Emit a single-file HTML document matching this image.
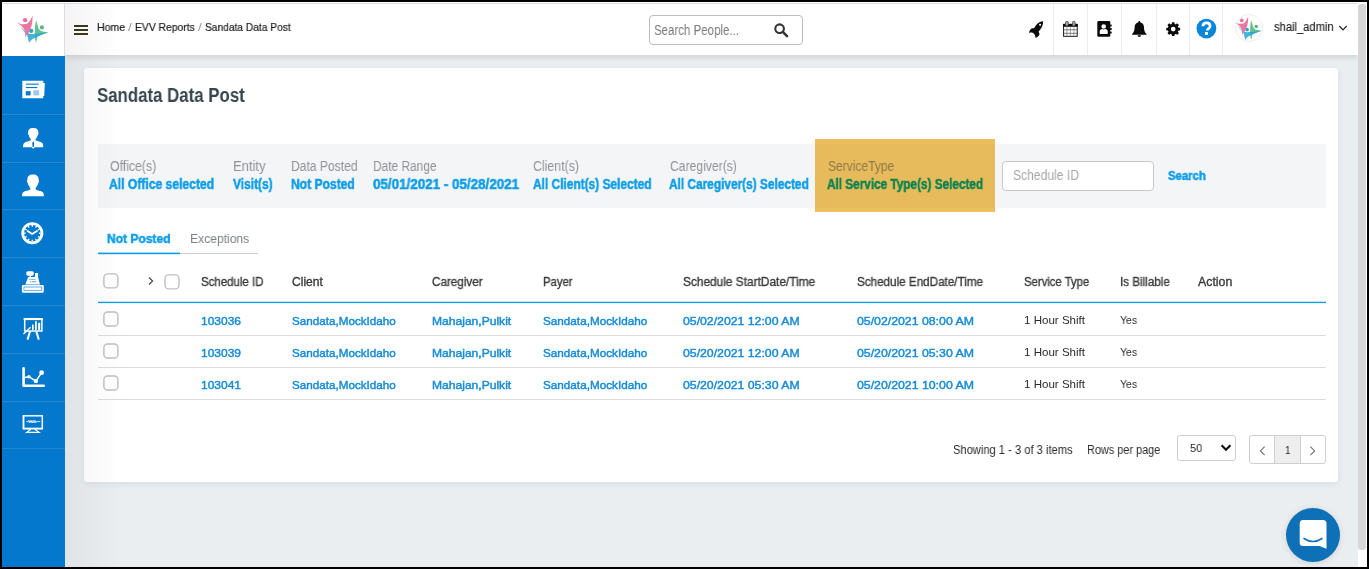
<!DOCTYPE html>
<html><head><meta charset="utf-8"><title>Sandata Data Post</title>
<style>
*{box-sizing:border-box;margin:0;padding:0}
html,body{width:1369px;height:569px;overflow:hidden;background:#000;font-family:"Liberation Sans",sans-serif}
#app{position:absolute;left:2px;top:2px;width:1365px;height:565px;background:#eaeef1;overflow:hidden}
.abs{position:absolute}
.t{position:absolute;white-space:pre;line-height:1;transform-origin:0 50%;display:block}
#root{position:absolute;left:-2px;top:-2px;width:1369px;height:569px}
.t{will-change:transform}
</style></head><body>
<div id="app"><div id="root">
<!-- page bg gradient edges -->
<div class="abs" style="left:65px;top:55px;width:1293px;height:512px;background:#eaeef1"></div>
<!-- header -->
<div class="abs" style="left:65px;top:2px;width:1293px;height:53px;background:#fff;box-shadow:0 2px 6px rgba(0,0,0,.13)"></div>
<div class="abs" style="left:2px;top:2px;width:1356px;height:1px;background:#fff"></div><div class="abs" style="left:3px;top:3px;width:1355px;height:1px;background:#dcdde2"></div>
<!-- logo box -->
<div class="abs" style="left:2px;top:4px;width:63px;height:52px;background:#fff;border-right:1px solid #d9dde2"></div>
<!-- sidebar -->
<div class="abs" id="side" style="left:2px;top:56px;width:63px;height:511px;background:#0478cc"></div>
<div class="abs" style="left:2px;top:114px;width:63px;height:1px;background:#2186d6"></div>
<div class="abs" style="left:2px;top:162px;width:63px;height:1px;background:#2186d6"></div>
<div class="abs" style="left:2px;top:209px;width:63px;height:1px;background:#2186d6"></div>
<div class="abs" style="left:2px;top:257px;width:63px;height:1px;background:#2186d6"></div>
<div class="abs" style="left:2px;top:305px;width:63px;height:1px;background:#2186d6"></div>
<div class="abs" style="left:2px;top:353px;width:63px;height:1px;background:#2186d6"></div>
<div class="abs" style="left:2px;top:401px;width:63px;height:1px;background:#2186d6"></div>
<div class="abs" style="left:2px;top:448px;width:63px;height:1px;background:#2186d6"></div>
<svg class="abs" style="left:20px;top:78px" width="28" height="24" viewBox="20 78 28 24">
<path d="M43 83 H44.8 L44.2 96 H43 Z" fill="#fff"/>
<rect x="22.3" y="80.7" width="20.9" height="17.6" rx=".6" fill="#fff"/>
<rect x="25.8" y="83.6" width="13" height="1.1" fill="#0478cc"/>
<rect x="25.8" y="87" width="11.5" height="1.1" fill="#0478cc"/>
<rect x="25.8" y="91.2" width="4.8" height="4.2" fill="#0478cc"/>
<rect x="33.3" y="90.3" width="5.8" height="5.1" fill="#9cc9ee"/>
</svg>
<svg class="abs" style="left:20px;top:124px" width="28" height="28" viewBox="20 124 28 28">
<path d="M28.3 132 C28 129.4 30 127.9 33.2 127.9 C36.4 127.9 38.4 129.4 38.2 132 C38.7 133 38.5 134.4 37.8 135 C37.3 137 36.4 138.3 35.6 139 V140.3 C37 141.2 40.5 141.6 42 142.8 C43 143.7 43.3 145.6 43.3 147.3 H34.6 L33.2 149 L31.8 147.3 H23 C23 145.6 23.3 143.7 24.4 142.8 C26 141.6 29.4 141.2 30.8 140.3 V139 C30 138.3 29.1 137 28.7 135 C28 134.4 27.8 133 28.3 132 Z" fill="#fff"/>
<path d="M33.2 141.2 L34.2 143 L33.9 146.2 L33.2 147.2 L32.5 146.2 L32.2 143 Z" fill="#0478cc"/>
</svg>
<svg class="abs" style="left:20px;top:172px" width="28" height="28" viewBox="20 172 28 28">
<path d="M27.4 179.5 C27 176.4 29.4 174.4 33 174.4 C36.6 174.4 39 176.4 38.6 179.5 C39.2 180.8 39 182.4 38.2 183.2 C37.7 185.4 36.6 187 35.7 187.8 V189.4 C37.4 190.4 41 190.8 42.6 192 C43.6 192.9 43.9 194.6 43.9 196.2 H22 C22 194.6 22.3 192.9 23.4 192 C25 190.8 28.6 190.4 30.3 189.4 V187.8 C29.4 187 28.3 185.4 27.8 183.2 C27 182.4 26.8 180.8 27.4 179.5 Z" fill="#fff"/>
</svg>
<svg class="abs" style="left:19px;top:220px" width="27" height="27" viewBox="19 220 27 27">
<circle cx="32.3" cy="233.2" r="9.65" fill="none" stroke="#fff" stroke-width="2.8"/><path d="M32.30 224.90 L32.30 226.70" stroke="#fff" stroke-width="1.3"/><path d="M36.45 226.01 L35.55 227.57" stroke="#fff" stroke-width="1.3"/><path d="M39.49 229.05 L37.93 229.95" stroke="#fff" stroke-width="1.3"/><path d="M40.60 233.20 L38.80 233.20" stroke="#fff" stroke-width="1.3"/><path d="M39.49 237.35 L37.93 236.45" stroke="#fff" stroke-width="1.3"/><path d="M36.45 240.39 L35.55 238.83" stroke="#fff" stroke-width="1.3"/><path d="M32.30 241.50 L32.30 239.70" stroke="#fff" stroke-width="1.3"/><path d="M28.15 240.39 L29.05 238.83" stroke="#fff" stroke-width="1.3"/><path d="M25.11 237.35 L26.67 236.45" stroke="#fff" stroke-width="1.3"/><path d="M24.00 233.20 L25.80 233.20" stroke="#fff" stroke-width="1.3"/><path d="M25.11 229.05 L26.67 229.95" stroke="#fff" stroke-width="1.3"/><path d="M28.15 226.01 L29.05 227.57" stroke="#fff" stroke-width="1.3"/>
<path d="M27.6 231 L32.1 233.9 L37 230.9" fill="none" stroke="#fff" stroke-width="1.8" stroke-linejoin="round" stroke-linecap="round"/>
</svg>
<svg class="abs" style="left:20px;top:268px" width="28" height="28" viewBox="20 268 28 28">
<rect x="26.3" y="271.2" width="7.5" height="4.5" rx="1.6" fill="#fff"/>
<rect x="29.6" y="275" width="1.4" height="2.4" fill="#fff"/>
<rect x="35" y="273" width="3.1" height="4" fill="#fff"/>
<path d="M28.2 276.9 H38 L40 284.4 H25.3 Z" fill="#fff"/>
<rect x="29.3" y="279" width="1" height="1" fill="#0478cc" opacity=".7"/><rect x="31" y="279" width="4.5" height="1" fill="#0478cc" opacity=".5"/>
<rect x="30.3" y="281.2" width="1" height="1" fill="#0478cc" opacity=".9"/><rect x="32" y="281" width="4.3" height="1.3" fill="#0478cc" opacity=".5"/>
<rect x="21.9" y="284.9" width="21.9" height="7.8" rx="1.3" fill="#fff"/>
<rect x="24" y="287" width="17.8" height="3.3" fill="none" stroke="#0478cc" stroke-width=".7" opacity=".85"/>
<rect x="24.6" y="288" width="7.5" height="1.3" fill="#fff"/><rect x="33.4" y="288" width="7.5" height="1.3" fill="#fff"/>
</svg>
<svg class="abs" style="left:20px;top:314px" width="28" height="30" viewBox="20 314 28 30">
<rect x="23.6" y="318.1" width="19.4" height="2" fill="#fff"/>
<rect x="24.7" y="319" width="17.2" height="12" fill="none" stroke="#fff" stroke-width="1.5"/>
<rect x="32" y="324.6" width="1.7" height="5.3" fill="#fff"/><rect x="35" y="321.2" width="1.8" height="8.7" fill="#fff"/><rect x="38.1" y="322.8" width="2.1" height="7.1" fill="#fff"/>
<path d="M23.4 334 L30.6 327.2" stroke="#fff" stroke-width="1.3"/>
<path d="M30 331.5 L27.5 339.6" stroke="#fff" stroke-width="2"/><path d="M36.3 331.5 L38.8 339.6" stroke="#fff" stroke-width="2"/>
</svg>
<svg class="abs" style="left:20px;top:364px" width="28" height="28" viewBox="20 364 28 28">
<path d="M23.6 368.2 V385.7 H43.8" fill="none" stroke="#fff" stroke-width="2.6" stroke-linejoin="round" stroke-linecap="round"/>
<path d="M24.5 377.4 L28.9 376.7 L35.9 381.2 L41.6 372.7" fill="none" stroke="#fff" stroke-width="1.5"/>
<circle cx="28.9" cy="376.7" r="1.7" fill="#fff"/><circle cx="35.9" cy="381.2" r="2.1" fill="#fff"/><circle cx="41.6" cy="372.7" r="2.4" fill="#fff"/>
</svg>
<svg class="abs" style="left:20px;top:412px" width="28" height="24" viewBox="20 412 28 24">
<rect x="23.4" y="415.8" width="18.9" height="12.9" fill="none" stroke="#fff" stroke-width="1.5" opacity=".95"/>
<rect x="22.8" y="415.2" width="1.6" height="14" fill="#fff" opacity=".8"/>
<rect x="23" y="427.6" width="19.8" height="1.7" fill="#fff" opacity=".75"/>
<path d="M26.3 421.6 H28 L28.6 420.4 L29.4 422.8 L30.2 420.4 L31 422.8 L31.8 420.4 L32.6 422.8 L33.4 420.4 L34.2 422.8 L35 420.4 L35.8 422.8 L36.5 421.6 H40.3" fill="none" stroke="#fff" stroke-width=".8"/>
<path d="M31 429.3 L26.6 432.4 H39.2 L34.8 429.3" fill="none" stroke="#fff" stroke-width="1.1"/>
</svg>
<svg class="abs" style="left:16px;top:14px;" width="34.0" height="30.0" viewBox="16 14 34 30">
<g>
<path d="M36.2 20.2 C36.6 21.6 37 22.9 37.3 24.2 C37.6 25.6 38 26.8 38.4 27.9 C39.2 29.6 40.4 30.7 41.8 31.3 C44 31.8 46.2 32.1 48.4 32.4 C46.4 33.2 44.4 33.8 42.5 34.2 C40.9 34.8 39.3 35.3 37.7 35.7 C37.3 38 36.7 40.4 35.9 42.7 C35.3 40.6 35 38.4 34.9 36.3 C34.7 35.2 34.7 34.2 34.7 33.1 C34.8 31 34.9 29 35 27 C35.1 24.8 35.5 22.4 36.2 20.2 Z" fill="#57b782" fill-opacity=".9"/>
<circle cx="41.9" cy="27.4" r="2.05" fill="#57b782"/>
<path d="M20 25.7 C21 27 22 28 22.6 28.6 C24 30.6 25.6 32 27 32.6 C28 33.4 28.8 33.8 29.6 33.7 C31.2 34.2 33 34 34.4 33.9 C36 33.8 38 33.6 39.5 33.4 C42 33 44.6 32.8 47 32.6 C44 34 41 35.2 38.1 36.4 C36 37.3 34 38.2 32.2 39.2 C31 40.2 30 41.4 29.1 42.8 C28.4 40.2 27.8 37.6 27.2 35.2 C26.4 34.2 25.6 33.3 24.8 32.4 C23 30.2 21.4 28 20 25.7 Z" fill="#27a6d6" fill-opacity=".85"/>
<circle cx="31.2" cy="30.9" r="2.15" fill="#27a6d6"/>
<path d="M17.3 22.7 C19 23.6 21 24.2 23 24.2 C24.6 24.2 26.2 24 27.4 23.6 C29.8 21.6 31.4 18.6 32.5 15.3 C32.7 17.8 32.5 20.4 32.2 22.8 C31.8 25.2 31.2 27.4 30.3 29.4 C29.3 31.6 28 33.6 26.6 35.3 C26.1 36 25.6 36.6 25.1 37.2 C25.2 35.6 25.4 34 25.5 32.4 C25 30.8 24.2 29.2 23.3 27.9 C22.3 26.6 21 25.5 19.6 24.6 C18.8 24 18 23.4 17.3 22.7 Z" fill="#e96d97" fill-opacity=".93"/>
<circle cx="25.1" cy="20.2" r="2.15" fill="#e96d97"/>
</g></svg>
<!-- hamburger -->
<div class="abs" style="left:74px;top:25px;width:14px;height:2px;background:#3c3a1c;box-shadow:0 4px 0 #3c3a1c,0 8px 0 #3c3a1c"></div>
<!-- search people box -->
<div class="abs" style="left:649px;top:15px;width:154px;height:30px;border:1px solid #bdbdbd;border-radius:4px;background:#fff"></div>
<svg class="abs" style="left:772px;top:21px" width="18" height="18" viewBox="0 0 18 18"><circle cx="7.6" cy="7.7" r="4.3" fill="none" stroke="#333" stroke-width="2.1"/><path d="M10.8 10.9 L15 15.1" stroke="#333" stroke-width="2.6" stroke-linecap="round"/></svg>
<div class="abs" style="left:1053px;top:4px;width:1px;height:51px;background:#ececec"></div>
<div class="abs" style="left:1087px;top:4px;width:1px;height:51px;background:#ececec"></div>
<div class="abs" style="left:1121px;top:4px;width:1px;height:51px;background:#ececec"></div>
<div class="abs" style="left:1156px;top:4px;width:1px;height:51px;background:#ececec"></div>
<div class="abs" style="left:1189px;top:4px;width:1px;height:51px;background:#ececec"></div>
<div class="abs" style="left:1222px;top:4px;width:1px;height:51px;background:#ececec"></div>
<svg class="abs" style="left:1026px;top:19px" width="20" height="21" viewBox="1026 19 20 21">
<path d="M1043.1 21.2 C1040.6 21.3 1038.2 22.6 1036.4 24.8 C1035.5 25.9 1034.7 27.1 1034 28.3 C1032.6 28 1031.2 28.4 1030.4 29.6 C1029.8 30.6 1029.2 31.8 1028.9 32.9 C1030.2 32.4 1031.6 32.3 1032.6 32.8 C1033.6 33.4 1034.6 34.3 1035 35.2 C1035.2 36 1035.4 37 1035.6 37.9 C1036.8 37.4 1038.4 36.4 1039.3 35 C1039.6 34 1039.2 32.8 1038.6 31.6 C1039.6 30.6 1040.8 29.2 1041.6 27.6 C1042.6 25.6 1043.2 23.4 1043.1 21.2 Z" fill="#0b0b0b"/>
<circle cx="1040.1" cy="24.8" r="1.05" fill="#fff"/></svg>
<svg class="abs" style="left:1061px;top:19px" width="19" height="20" viewBox="1061 19 19 20">
<rect x="1063.6" y="24.4" width="13.6" height="11.9" fill="#fff" stroke="#0b0b0b" stroke-width=".95"/>
<rect x="1063.1" y="23.9" width="14.6" height="2.9" fill="#0b0b0b"/><path d="M1066.9 26.6 V36.3" stroke="#8a8a8a" stroke-width=".7"/><path d="M1070.4 26.6 V36.3" stroke="#8a8a8a" stroke-width=".7"/><path d="M1073.9 26.6 V36.3" stroke="#8a8a8a" stroke-width=".7"/><path d="M1063.6 29.8 H1077.2" stroke="#444" stroke-width=".7"/><path d="M1063.6 33.3 H1077.2" stroke="#444" stroke-width=".7"/>
<rect x="1065.5" y="21.3" width="2.8" height="4.8" rx="1.3" fill="#a5a5a5" stroke="#333" stroke-width=".7"/>
<rect x="1072.4" y="21.3" width="2.8" height="4.8" rx="1.3" fill="#a5a5a5" stroke="#333" stroke-width=".7"/>
</svg>
<svg class="abs" style="left:1095px;top:19px" width="19" height="20" viewBox="1095 19 19 20">
<rect x="1097.3" y="21.1" width="13" height="15.7" rx="1.3" fill="#0b0b0b"/>
<rect x="1110" y="24.6" width="1.7" height="2" rx=".5" fill="#0b0b0b"/><rect x="1110" y="28" width="1.7" height="2" rx=".5" fill="#0b0b0b"/><rect x="1110" y="31.4" width="1.7" height="2" rx=".5" fill="#0b0b0b"/>
<circle cx="1103.7" cy="26.5" r="2.3" fill="#fff"/>
<path d="M1099.7 33 V31.8 C1099.7 30 1101 29.2 1102.2 29.1 C1103 29.7 1104.4 29.7 1105.2 29.1 C1106.4 29.2 1107.8 30 1107.8 31.8 V33 C1107.8 33.6 1107.4 34 1106.8 34 H1100.7 C1100.1 34 1099.7 33.6 1099.7 33 Z" fill="#fff"/>
</svg>
<svg class="abs" style="left:1130px;top:19px" width="19" height="20" viewBox="1130 19 19 20">
<path d="M1139.3 21.1 C1139.9 21.1 1140.2 21.6 1140.2 22.2 C1142.6 22.7 1144 24.6 1144 27.2 C1144 30.4 1144.8 32.4 1146.5 34 V34.8 H1132.1 V34 C1133.8 32.4 1134.6 30.4 1134.6 27.2 C1134.6 24.6 1136 22.7 1138.4 22.2 C1138.4 21.6 1138.7 21.1 1139.3 21.1 Z" fill="#0b0b0b"/>
<path d="M1137.5 35.2 H1141.1 C1141.1 36.2 1140.3 36.9 1139.3 36.9 C1138.3 36.9 1137.5 36.2 1137.5 35.2 Z" fill="#0b0b0b"/>
</svg>
<svg class="abs" style="left:1164px;top:20px" width="19" height="19" viewBox="1164 20 19 19">
<rect x="1171.85" y="22.2" width="2.7" height="3.4" rx=".5" fill="#0b0b0b" transform="rotate(0 1173.2 29.1)"/><rect x="1171.85" y="22.2" width="2.7" height="3.4" rx=".5" fill="#0b0b0b" transform="rotate(45 1173.2 29.1)"/><rect x="1171.85" y="22.2" width="2.7" height="3.4" rx=".5" fill="#0b0b0b" transform="rotate(90 1173.2 29.1)"/><rect x="1171.85" y="22.2" width="2.7" height="3.4" rx=".5" fill="#0b0b0b" transform="rotate(135 1173.2 29.1)"/><rect x="1171.85" y="22.2" width="2.7" height="3.4" rx=".5" fill="#0b0b0b" transform="rotate(180 1173.2 29.1)"/><rect x="1171.85" y="22.2" width="2.7" height="3.4" rx=".5" fill="#0b0b0b" transform="rotate(225 1173.2 29.1)"/><rect x="1171.85" y="22.2" width="2.7" height="3.4" rx=".5" fill="#0b0b0b" transform="rotate(270 1173.2 29.1)"/><rect x="1171.85" y="22.2" width="2.7" height="3.4" rx=".5" fill="#0b0b0b" transform="rotate(315 1173.2 29.1)"/><circle cx="1173.2" cy="29.1" r="3.9" fill="none" stroke="#0b0b0b" stroke-width="3.1"/></svg>
<svg class="abs" style="left:1195px;top:17px" width="23" height="23" viewBox="1195 17 23 23">
<circle cx="1206.4" cy="28.6" r="9.9" fill="#0a86d8"/>
<path d="M1202.9 26.3 C1202.9 24 1204.4 22.8 1206.5 22.8 C1208.6 22.8 1210.1 24 1210.1 25.9 C1210.1 27.4 1209.2 28.1 1208.2 28.8 C1207.5 29.3 1207.3 29.7 1207.3 30.6" fill="none" stroke="#fff" stroke-width="2.7"/>
<rect x="1205" y="32" width="2.9" height="2.9" fill="#fff"/>
</svg>
<div class="abs" style="left:1234.5px;top:14px;width:28px;height:28px;border-radius:50%;background:#fff;border:1px solid #ededed"></div>
<svg class="abs" style="left:1234.2px;top:14.6px;" width="29.2" height="25.8" viewBox="16 14 34 30">
<g>
<path d="M36.2 20.2 C36.6 21.6 37 22.9 37.3 24.2 C37.6 25.6 38 26.8 38.4 27.9 C39.2 29.6 40.4 30.7 41.8 31.3 C44 31.8 46.2 32.1 48.4 32.4 C46.4 33.2 44.4 33.8 42.5 34.2 C40.9 34.8 39.3 35.3 37.7 35.7 C37.3 38 36.7 40.4 35.9 42.7 C35.3 40.6 35 38.4 34.9 36.3 C34.7 35.2 34.7 34.2 34.7 33.1 C34.8 31 34.9 29 35 27 C35.1 24.8 35.5 22.4 36.2 20.2 Z" fill="#57b782" fill-opacity=".9"/>
<circle cx="41.9" cy="27.4" r="2.05" fill="#57b782"/>
<path d="M20 25.7 C21 27 22 28 22.6 28.6 C24 30.6 25.6 32 27 32.6 C28 33.4 28.8 33.8 29.6 33.7 C31.2 34.2 33 34 34.4 33.9 C36 33.8 38 33.6 39.5 33.4 C42 33 44.6 32.8 47 32.6 C44 34 41 35.2 38.1 36.4 C36 37.3 34 38.2 32.2 39.2 C31 40.2 30 41.4 29.1 42.8 C28.4 40.2 27.8 37.6 27.2 35.2 C26.4 34.2 25.6 33.3 24.8 32.4 C23 30.2 21.4 28 20 25.7 Z" fill="#27a6d6" fill-opacity=".85"/>
<circle cx="31.2" cy="30.9" r="2.15" fill="#27a6d6"/>
<path d="M17.3 22.7 C19 23.6 21 24.2 23 24.2 C24.6 24.2 26.2 24 27.4 23.6 C29.8 21.6 31.4 18.6 32.5 15.3 C32.7 17.8 32.5 20.4 32.2 22.8 C31.8 25.2 31.2 27.4 30.3 29.4 C29.3 31.6 28 33.6 26.6 35.3 C26.1 36 25.6 36.6 25.1 37.2 C25.2 35.6 25.4 34 25.5 32.4 C25 30.8 24.2 29.2 23.3 27.9 C22.3 26.6 21 25.5 19.6 24.6 C18.8 24 18 23.4 17.3 22.7 Z" fill="#e96d97" fill-opacity=".93"/>
<circle cx="25.1" cy="20.2" r="2.15" fill="#e96d97"/>
</g></svg>
<svg class="abs" style="left:1337px;top:23px" width="12" height="10" viewBox="1337 23 12 10"><path d="M1339.3 26 L1343 29.8 L1346.7 26" fill="none" stroke="#222" stroke-width="1.2"/></svg>
<!-- card -->
<div class="abs" style="left:84px;top:68px;width:1254px;height:414px;background:#fff;border-radius:3px;box-shadow:0 2px 6px rgba(0,0,0,.07)"></div>
<!-- filter bar -->
<div class="abs" style="left:98px;top:144px;width:1228px;height:64px;background:#f3f5f7"></div>
<div class="abs" style="left:815px;top:139px;width:180px;height:73px;background:#ebbf5e"></div><div class="abs" style="left:815px;top:144px;width:180px;height:64px;background:#e7bb5b"></div>
<div class="abs" style="left:1002px;top:161px;width:152px;height:30px;border:1px solid #c9c9c9;border-radius:4px;background:#fff"></div>
<!-- tabs -->
<div class="abs" style="left:98px;top:253px;width:160px;height:1px;background:#d0d0d0"></div>
<svg class="abs" style="left:98px;top:250px" width="82" height="6" viewBox="98 250 82 6"><rect x="98" y="252.6" width="82" height="1.6" fill="#0e9de5"/></svg>
<!-- table lines -->
<svg class="abs" style="left:98px;top:300px" width="1228" height="5" viewBox="98 300 1228 5"><rect x="98" y="301.75" width="1228" height="1.35" fill="#089fe4"/></svg>
<div class="abs" style="left:98px;top:335px;width:1228px;height:1px;background:#dcdcdc"></div>
<div class="abs" style="left:98px;top:367px;width:1228px;height:1px;background:#dcdcdc"></div>
<div class="abs" style="left:98px;top:399px;width:1228px;height:1px;background:#dcdcdc"></div>
<!-- checkboxes -->
<svg class="abs" style="left:101px;top:271px" width="20" height="20" viewBox="101 271 20 20"><rect x="103.90" y="273.90" width="14" height="14" rx="3.6" fill="#fff" stroke="#c0c0c0" stroke-width="1.4"/></svg>
<svg class="abs" style="left:162px;top:272px" width="20" height="20" viewBox="162 272 20 20"><rect x="165.00" y="274.90" width="14" height="14" rx="3.6" fill="#fff" stroke="#c0c0c0" stroke-width="1.4"/></svg>
<svg class="abs" style="left:101px;top:309px" width="20" height="20" viewBox="101 309 20 20"><rect x="103.90" y="312.00" width="14" height="14" rx="3.6" fill="#fff" stroke="#c0c0c0" stroke-width="1.4"/></svg>
<svg class="abs" style="left:101px;top:341px" width="20" height="20" viewBox="101 341 20 20"><rect x="103.90" y="344.00" width="14" height="14" rx="3.6" fill="#fff" stroke="#c0c0c0" stroke-width="1.4"/></svg>
<svg class="abs" style="left:101px;top:373px" width="20" height="20" viewBox="101 373 20 20"><rect x="103.90" y="376.00" width="14" height="14" rx="3.6" fill="#fff" stroke="#c0c0c0" stroke-width="1.4"/></svg>
<svg class="abs" style="left:146px;top:275px" width="10" height="12" viewBox="0 0 10 12"><path d="M3 2.5 L6.6 6 L3 9.5" fill="none" stroke="#444" stroke-width="1.15"/></svg>
<!-- pagination -->
<div class="abs" style="left:1177px;top:435px;width:59px;height:26px;border:1px solid #cfcfcf;border-radius:3px;background:#fff"></div>
<svg class="abs" style="left:1220px;top:443px" width="12" height="10" viewBox="0 0 12 10"><path d="M1.6 2.2 L6 6.8 L10.4 2.2" fill="none" stroke="#111" stroke-width="2.1"/></svg>
<div class="abs" style="left:1249px;top:435px;width:77px;height:29px;border:1px solid #cfcfcf;border-radius:3px;background:#fff"></div>
<div class="abs" style="left:1274px;top:436px;width:27px;height:27px;background:#eeeeee;border-left:1px solid #cfcfcf;border-right:1px solid #cfcfcf"></div>
<svg class="abs" style="left:1257px;top:444px" width="10" height="14" viewBox="0 0 10 14"><path d="M7.6 2.7 L3.4 6.9 L7.6 11.1" fill="none" stroke="#777" stroke-width="1.2"/></svg>
<svg class="abs" style="left:1308px;top:444px" width="10" height="14" viewBox="0 0 10 14"><path d="M2.4 2.7 L6.6 6.9 L2.4 11.1" fill="none" stroke="#777" stroke-width="1.2"/></svg>
<!-- chat -->
<div class="abs" style="left:1286px;top:508px;width:54px;height:54px;border-radius:50%;background:#0e70b6;box-shadow:0 1px 6px rgba(0,0,0,.12)"></div>
<svg class="abs" style="left:1286px;top:508px" width="54" height="54" viewBox="0 0 54 54"><path d="M17 12 H37 Q40.5 12 40.5 15.5 V40.8 L33.5 38 H17 Q13.7 38 13.7 34.7 V15.5 Q13.7 12 17 12 Z" fill="#fff"/><path d="M18 30.5 Q27 36.5 36 30.5" fill="none" stroke="#0e70b6" stroke-width="1.6" stroke-linecap="round"/></svg>
<div class="abs" style="left:65px;top:4px;width:60px;height:563px;background:linear-gradient(90deg,rgba(0,0,0,.045),rgba(0,0,0,.02) 50%,rgba(0,0,0,0))"></div>
<!-- scrollbar -->
<div class="abs" style="left:1358px;top:2px;width:9px;height:565px;background:#fff"></div>
<div class="abs" style="left:1358px;top:4px;width:8px;height:546px;background:#d7d7d7;border-radius:3px"></div>
<span class="t" style="left:96.7px;top:22px;font-size:11px;font-weight:400;color:#1c1c1c;transform:scaleX(0.9576);-webkit-text-stroke:0.2px #1c1c1c;">Home</span>
<span class="t" style="left:128.2px;top:22px;font-size:11px;font-weight:400;color:#9a9a9a;transform:scaleX(1.2408);">/</span>
<span class="t" style="left:135.0px;top:22px;font-size:11px;font-weight:400;color:#1c1c1c;transform:scaleX(0.9403);-webkit-text-stroke:0.2px #1c1c1c;">EVV Reports</span>
<span class="t" style="left:198.3px;top:22px;font-size:11px;font-weight:400;color:#9a9a9a;transform:scaleX(1.2408);">/</span>
<span class="t" style="left:205.0px;top:22px;font-size:11px;font-weight:400;color:#1c1c1c;transform:scaleX(0.9281);-webkit-text-stroke:0.2px #1c1c1c;">Sandata Data Post</span>
<span class="t" style="left:654.4px;top:23px;font-size:14px;font-weight:400;color:#7a7a7a;transform:scaleX(0.8211);">Search People...</span>
<span class="t" style="left:1274.0px;top:21px;font-size:12px;font-weight:400;color:#222;transform:scaleX(0.9321);-webkit-text-stroke:0.15px #222;">shail_admin</span>
<span class="t" style="left:97.3px;top:86px;font-size:19.5px;font-weight:700;color:#37474f;transform:scaleX(0.8626);">Sandata Data Post</span>
<span class="t" style="left:109.6px;top:159px;font-size:14px;font-weight:400;color:#8f9396;transform:scaleX(0.8776);">Office(s)</span>
<span class="t" style="left:109.3px;top:177px;font-size:14px;font-weight:700;color:#0e9de5;transform:scaleX(0.8658);-webkit-text-stroke:0.5px #0e9de5;">All Office selected</span>
<span class="t" style="left:232.9px;top:159px;font-size:14px;font-weight:400;color:#8f9396;transform:scaleX(0.9310);">Entity</span>
<span class="t" style="left:232.6px;top:177px;font-size:14px;font-weight:700;color:#0e9de5;transform:scaleX(0.8528);-webkit-text-stroke:0.5px #0e9de5;">Visit(s)</span>
<span class="t" style="left:291.0px;top:159px;font-size:14px;font-weight:400;color:#8f9396;transform:scaleX(0.8642);">Data Posted</span>
<span class="t" style="left:290.7px;top:177px;font-size:14px;font-weight:700;color:#0e9de5;transform:scaleX(0.8634);-webkit-text-stroke:0.5px #0e9de5;">Not Posted</span>
<span class="t" style="left:373.0px;top:159px;font-size:14px;font-weight:400;color:#8f9396;transform:scaleX(0.8499);">Date Range</span>
<span class="t" style="left:372.7px;top:177px;font-size:14px;font-weight:700;color:#0e9de5;transform:scaleX(0.9575);-webkit-text-stroke:0.5px #0e9de5;">05/01/2021 - 05/28/2021</span>
<span class="t" style="left:532.8px;top:159px;font-size:14px;font-weight:400;color:#8f9396;transform:scaleX(0.8825);">Client(s)</span>
<span class="t" style="left:532.5px;top:177px;font-size:14px;font-weight:700;color:#0e9de5;transform:scaleX(0.8509);-webkit-text-stroke:0.5px #0e9de5;">All Client(s) Selected</span>
<span class="t" style="left:669.5px;top:159px;font-size:14px;font-weight:400;color:#8f9396;transform:scaleX(0.8687);">Caregiver(s)</span>
<span class="t" style="left:669.2px;top:177px;font-size:14px;font-weight:700;color:#0e9de5;transform:scaleX(0.8474);-webkit-text-stroke:0.5px #0e9de5;">All Caregiver(s) Selected</span>
<span class="t" style="left:827.5px;top:159px;font-size:14px;font-weight:400;color:#8c7a4a;transform:scaleX(0.8592);">ServiceType</span>
<span class="t" style="left:827.3px;top:177px;font-size:14px;font-weight:700;color:#0c8251;transform:scaleX(0.8405);-webkit-text-stroke:0.5px #0c8251;">All Service Type(s) Selected</span>
<span class="t" style="left:1013.3px;top:168px;font-size:14px;font-weight:400;color:#a9a9a9;transform:scaleX(0.8652);">Schedule ID</span>
<span class="t" style="left:1167.7px;top:170px;font-size:12px;font-weight:700;color:#0e9de5;transform:scaleX(0.9443);-webkit-text-stroke:0.5px #0e9de5;">Search</span>
<span class="t" style="left:106.9px;top:232px;font-size:13px;font-weight:700;color:#0e9de5;transform:scaleX(0.9253);-webkit-text-stroke:0.5px #0e9de5;">Not Posted</span>
<span class="t" style="left:189.5px;top:232px;font-size:13px;font-weight:400;color:#7d8185;transform:scaleX(0.9309);">Exceptions</span>
<span class="t" style="left:200.7px;top:276px;font-size:12px;font-weight:400;color:#3a3a3a;transform:scaleX(0.9560);-webkit-text-stroke:0.35px #3a3a3a;">Schedule ID</span>
<span class="t" style="left:292.0px;top:276px;font-size:12px;font-weight:400;color:#3a3a3a;transform:scaleX(1.0069);-webkit-text-stroke:0.35px #3a3a3a;">Client</span>
<span class="t" style="left:431.8px;top:276px;font-size:12px;font-weight:400;color:#3a3a3a;transform:scaleX(0.9744);-webkit-text-stroke:0.35px #3a3a3a;">Caregiver</span>
<span class="t" style="left:542.8px;top:276px;font-size:12px;font-weight:400;color:#3a3a3a;transform:scaleX(0.9407);-webkit-text-stroke:0.35px #3a3a3a;">Payer</span>
<span class="t" style="left:682.9px;top:276px;font-size:12px;font-weight:400;color:#3a3a3a;transform:scaleX(0.9886);-webkit-text-stroke:0.35px #3a3a3a;">Schedule StartDate/Time</span>
<span class="t" style="left:856.6px;top:276px;font-size:12px;font-weight:400;color:#3a3a3a;transform:scaleX(0.9719);-webkit-text-stroke:0.35px #3a3a3a;">Schedule EndDate/Time</span>
<span class="t" style="left:1024.0px;top:276px;font-size:12px;font-weight:400;color:#3a3a3a;transform:scaleX(0.9428);-webkit-text-stroke:0.35px #3a3a3a;">Service Type</span>
<span class="t" style="left:1120.0px;top:276px;font-size:12px;font-weight:400;color:#3a3a3a;transform:scaleX(0.9696);-webkit-text-stroke:0.35px #3a3a3a;">Is Billable</span>
<span class="t" style="left:1198.0px;top:276px;font-size:12px;font-weight:400;color:#3a3a3a;transform:scaleX(1.0282);-webkit-text-stroke:0.35px #3a3a3a;">Action</span>
<span class="t" style="left:200.9px;top:316px;font-size:11.5px;font-weight:400;color:#188cd6;transform:scaleX(1.0423);-webkit-text-stroke:0.45px #188cd6;">103036</span>
<span class="t" style="left:292.0px;top:316px;font-size:11.5px;font-weight:400;color:#188cd6;transform:scaleX(1.0147);-webkit-text-stroke:0.45px #188cd6;">Sandata,MockIdaho</span>
<span class="t" style="left:431.8px;top:316px;font-size:11.5px;font-weight:400;color:#188cd6;transform:scaleX(1.0499);-webkit-text-stroke:0.45px #188cd6;">Mahajan,Pulkit</span>
<span class="t" style="left:542.8px;top:316px;font-size:11.5px;font-weight:400;color:#188cd6;transform:scaleX(1.0186);-webkit-text-stroke:0.45px #188cd6;">Sandata,MockIdaho</span>
<span class="t" style="left:682.9px;top:316px;font-size:11.5px;font-weight:400;color:#188cd6;transform:scaleX(1.0664);-webkit-text-stroke:0.45px #188cd6;">05/02/2021 12:00 AM</span>
<span class="t" style="left:856.6px;top:316px;font-size:11.5px;font-weight:400;color:#188cd6;transform:scaleX(1.0691);-webkit-text-stroke:0.45px #188cd6;">05/02/2021 08:00 AM</span>
<span class="t" style="left:1024.0px;top:315px;font-size:11.5px;font-weight:400;color:#2b2b2b;transform:scaleX(1.0044);">1 Hour Shift</span>
<span class="t" style="left:1120.0px;top:315px;font-size:11.5px;font-weight:400;color:#2b2b2b;transform:scaleX(0.9166);">Yes</span>
<span class="t" style="left:200.9px;top:348px;font-size:11.5px;font-weight:400;color:#188cd6;transform:scaleX(1.0423);-webkit-text-stroke:0.45px #188cd6;">103039</span>
<span class="t" style="left:292.0px;top:348px;font-size:11.5px;font-weight:400;color:#188cd6;transform:scaleX(1.0147);-webkit-text-stroke:0.45px #188cd6;">Sandata,MockIdaho</span>
<span class="t" style="left:431.8px;top:348px;font-size:11.5px;font-weight:400;color:#188cd6;transform:scaleX(1.0499);-webkit-text-stroke:0.45px #188cd6;">Mahajan,Pulkit</span>
<span class="t" style="left:542.8px;top:348px;font-size:11.5px;font-weight:400;color:#188cd6;transform:scaleX(1.0186);-webkit-text-stroke:0.45px #188cd6;">Sandata,MockIdaho</span>
<span class="t" style="left:682.9px;top:348px;font-size:11.5px;font-weight:400;color:#188cd6;transform:scaleX(1.0664);-webkit-text-stroke:0.45px #188cd6;">05/20/2021 12:00 AM</span>
<span class="t" style="left:856.6px;top:348px;font-size:11.5px;font-weight:400;color:#188cd6;transform:scaleX(1.0691);-webkit-text-stroke:0.45px #188cd6;">05/20/2021 05:30 AM</span>
<span class="t" style="left:1024.0px;top:347px;font-size:11.5px;font-weight:400;color:#2b2b2b;transform:scaleX(1.0044);">1 Hour Shift</span>
<span class="t" style="left:1120.0px;top:347px;font-size:11.5px;font-weight:400;color:#2b2b2b;transform:scaleX(0.9166);">Yes</span>
<span class="t" style="left:200.9px;top:380px;font-size:11.5px;font-weight:400;color:#188cd6;transform:scaleX(1.0423);-webkit-text-stroke:0.45px #188cd6;">103041</span>
<span class="t" style="left:292.0px;top:380px;font-size:11.5px;font-weight:400;color:#188cd6;transform:scaleX(1.0147);-webkit-text-stroke:0.45px #188cd6;">Sandata,MockIdaho</span>
<span class="t" style="left:431.8px;top:380px;font-size:11.5px;font-weight:400;color:#188cd6;transform:scaleX(1.0499);-webkit-text-stroke:0.45px #188cd6;">Mahajan,Pulkit</span>
<span class="t" style="left:542.8px;top:380px;font-size:11.5px;font-weight:400;color:#188cd6;transform:scaleX(1.0186);-webkit-text-stroke:0.45px #188cd6;">Sandata,MockIdaho</span>
<span class="t" style="left:682.9px;top:380px;font-size:11.5px;font-weight:400;color:#188cd6;transform:scaleX(1.0664);-webkit-text-stroke:0.45px #188cd6;">05/20/2021 05:30 AM</span>
<span class="t" style="left:856.6px;top:380px;font-size:11.5px;font-weight:400;color:#188cd6;transform:scaleX(1.0691);-webkit-text-stroke:0.45px #188cd6;">05/20/2021 10:00 AM</span>
<span class="t" style="left:1024.0px;top:379px;font-size:11.5px;font-weight:400;color:#2b2b2b;transform:scaleX(1.0044);">1 Hour Shift</span>
<span class="t" style="left:1120.0px;top:379px;font-size:11.5px;font-weight:400;color:#2b2b2b;transform:scaleX(0.9166);">Yes</span>
<span class="t" style="left:953.2px;top:444px;font-size:12px;font-weight:400;color:#2b2b2b;transform:scaleX(0.9290);">Showing 1 - 3 of 3 items</span>
<span class="t" style="left:1087.4px;top:444px;font-size:12px;font-weight:400;color:#2b2b2b;transform:scaleX(0.9081);">Rows per page</span>
<span class="t" style="left:1190.3px;top:443px;font-size:11.5px;font-weight:400;color:#1f1f1f;transform:scaleX(0.9534);">50</span>
<span class="t" style="left:1284.5px;top:445px;font-size:11.5px;font-weight:400;color:#222;transform:scaleX(0.8585);">1</span>
</div></div>
</body></html>
